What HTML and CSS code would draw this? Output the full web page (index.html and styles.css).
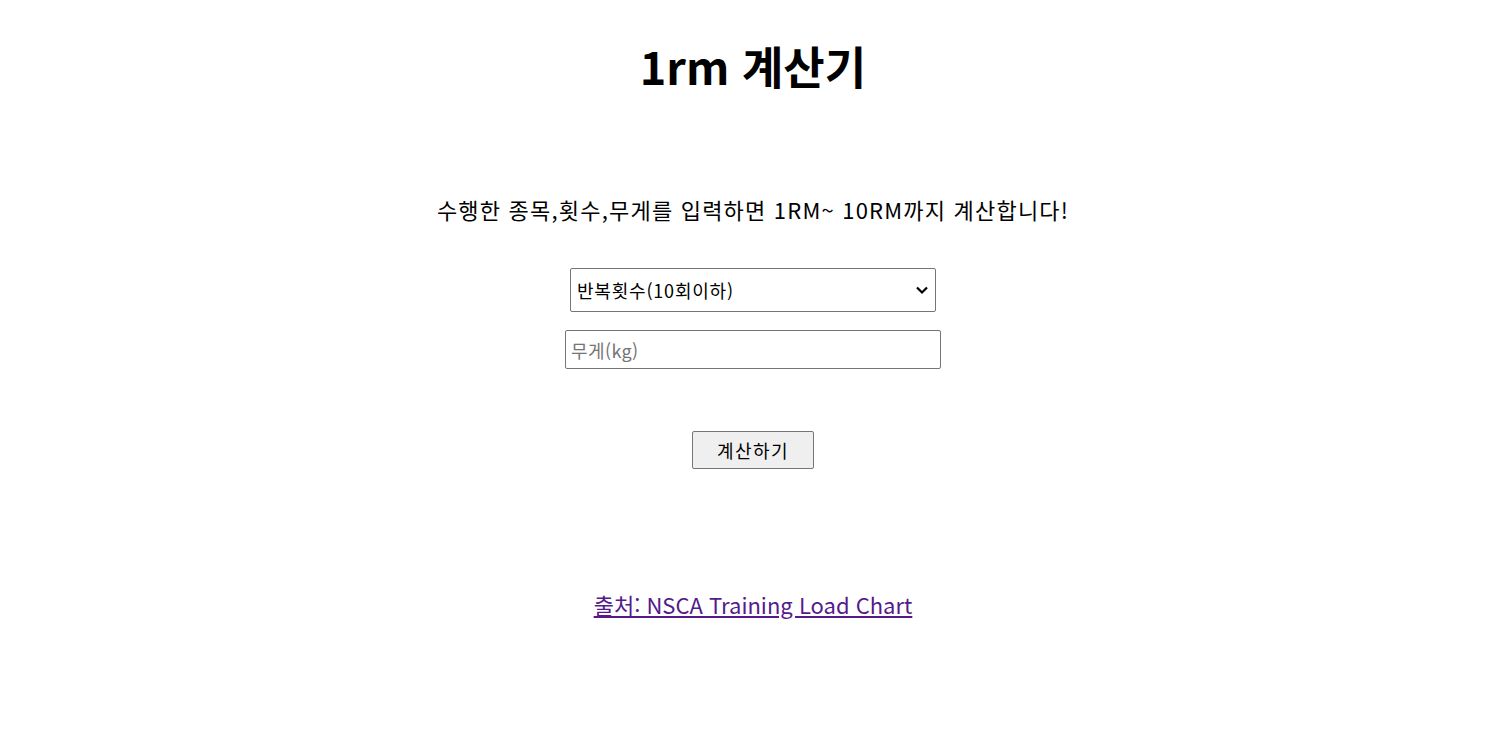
FILE: index.html
```html
<!DOCTYPE html>
<html lang="ko">
<head>
<meta charset="utf-8">
<title>1rm 계산기</title>
<link rel="stylesheet" href="styles.css">
</head>
<body>
<main class="page">
  <h1 class="title">1rm 계산기</h1>
  <p class="intro">수행한 종목,횟수,무게를 입력하면 1RM~ 10RM까지 계산합니다!</p>
  <form class="calc">
    <select class="reps">
      <option>반복횟수(10회이하)</option>
    </select>
    <input class="weight" type="text" placeholder="무게(kg)">
    <button class="submit" type="button">계산하기</button>
  </form>
  <a class="source" href="#">출처: NSCA Training Load Chart</a>
</main>
</body>
</html>
```

FILE: styles.css
```css
html, body {
  margin: 0;
  padding: 0;
  background: #fff;
}
body {
  font-family: "Noto Sans CJK KR", "Noto Sans", sans-serif;
  color: #000;
  padding-left: 8px;
}
.page {
  display: flex;
  flex-direction: column;
  align-items: center;
}
.title {
  margin: 34px 0 0;
  font-size: 45px;
  font-weight: 700;
  line-height: 64px;
}
.intro {
  margin: 96px 0 0;
  font-size: 22px;
  line-height: 30px;
  letter-spacing: 1.2px;
}
.calc {
  display: flex;
  flex-direction: column;
  align-items: center;
  margin-top: 44px;
}
.reps {
  appearance: none;
  -webkit-appearance: none;
  width: 366px;
  height: 44px;
  font-family: "Noto Sans CJK KR", sans-serif;
  font-size: 18px;
  letter-spacing: 0.8px;
  padding: 0 30px 0 6px;
  border: 1px solid #767676;
  border-radius: 2px;
  color: #000;
  background: #fff url("data:image/svg+xml;utf8,<svg xmlns='http://www.w3.org/2000/svg' width='14' height='10' viewBox='0 0 14 10'><path d='M2 2.5 L7 7.5 L12 2.5' fill='none' stroke='black' stroke-width='2.2'/></svg>") no-repeat right 6px center;
}
.weight {
  margin-top: 18px;
  width: 376px;
  height: 39px;
  box-sizing: border-box;
  font-family: "Noto Sans CJK KR", sans-serif;
  font-size: 18px;
  letter-spacing: 0.4px;
  padding: 0 5px;
  border: 1px solid #767676;
  border-radius: 2px;
}
.weight::placeholder {
  color: #757575;
}
.submit {
  margin-top: 62px;
  width: 122px;
  height: 38px;
  font-family: "Noto Sans CJK KR", sans-serif;
  font-size: 18px;
  letter-spacing: 1.5px;
  background: #efefef;
  border: 1px solid #767676;
  border-radius: 2px;
  color: #000;
}
.source {
  margin-top: 119px;
  font-size: 22px;
  color: #551a8b;
}
```
